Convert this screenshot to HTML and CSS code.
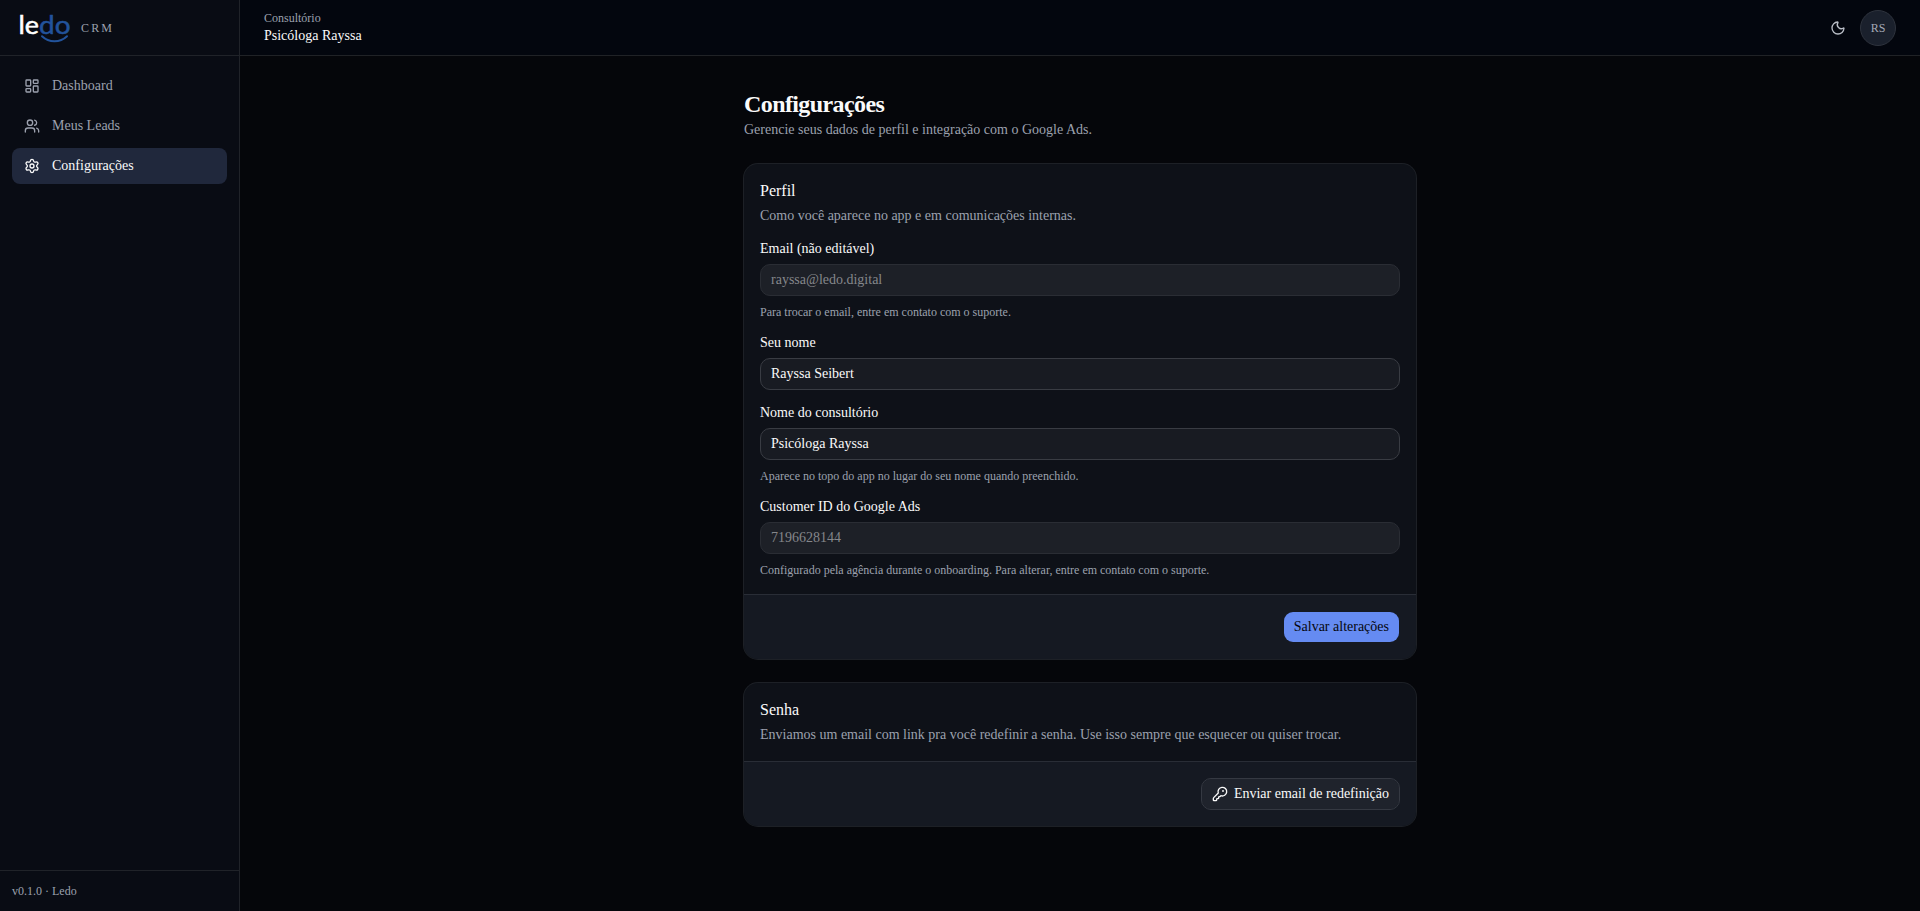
FILE: index.html
```
<!DOCTYPE html>
<html lang="pt-BR">
<head>
    <meta charset="UTF-8">
    <meta name="viewport" content="width=device-width, initial-scale=1.0">
    <title>Configurações · Ledo CRM</title>
    <link rel="stylesheet" href="styles.css">
</head>
<body>
    <div class="layout">
        <aside class="sidebar">
            <div class="brand">
                <svg class="logo" width="52" height="44" viewBox="0 0 52 44">
                    <text class="logo-le" x="-1.5" y="27.500" textLength="20.500" lengthAdjust="spacingAndGlyphs">le</text>
                    <text class="logo-do" x="19" y="27.500" textLength="31.500" lengthAdjust="spacingAndGlyphs">do</text>
                    <path class="smile" d="M22 30.200c7 6.600 18 6.600 25 0"/>
                </svg>
                <span class="brand-tag">CRM</span>
            </div>
            <nav class="nav">
                <a href="#" class="nav-item">
                    <svg class="icon" viewBox="0 0 24 24"><rect width="7" height="9" x="3" y="3" rx="1"/><rect width="7" height="5" x="14" y="3" rx="1"/><rect width="7" height="9" x="14" y="12" rx="1"/><rect width="7" height="5" x="3" y="16" rx="1"/></svg>
                    Dashboard
                </a>
                <a href="#" class="nav-item">
                    <svg class="icon" viewBox="0 0 24 24"><path d="M16 21v-2a4 4 0 0 0-4-4H6a4 4 0 0 0-4 4v2"/><path d="M16 3.128a4 4 0 0 1 0 7.744"/><path d="M22 21v-2a4 4 0 0 0-3-3.870"/><circle cx="9" cy="7" r="4"/></svg>
                    Meus Leads
                </a>
                <a href="#" class="nav-item on">
                    <svg class="icon" viewBox="0 0 24 24"><path d="M9.671 4.136a2.340 2.340 0 0 1 4.659 0 2.340 2.340 0 0 0 3.319 1.915 2.340 2.340 0 0 1 2.330 4.033 2.340 2.340 0 0 0 0 3.831 2.340 2.340 0 0 1-2.330 4.033 2.340 2.340 0 0 0-3.319 1.915 2.340 2.340 0 0 1-4.659 0 2.340 2.340 0 0 0-3.320-1.915 2.340 2.340 0 0 1-2.330-4.033 2.340 2.340 0 0 0 0-3.831A2.340 2.340 0 0 1 6.350 6.051a2.340 2.340 0 0 0 3.319-1.915"/><circle cx="12" cy="12" r="3"/></svg>
                    Configurações
                </a>
            </nav>
            <div class="version">v0.1.0 · Ledo</div>
        </aside>

        <div class="page">
            <header class="topbar">
                <div class="office">
                    <span class="office-label">Consultório</span>
                    <span class="office-name">Psicóloga Rayssa</span>
                </div>
                <div class="actions">
                    <button class="theme" aria-label="Tema">
                        <svg class="icon" viewBox="0 0 24 24"><path d="M20.985 12.486a9 9 0 1 1-9.473-9.472c.405-.022.617.46.402.803a6 6 0 0 0 8.268 8.268c.344-.215.825-.004.803.401"/></svg>
                    </button>
                    <div class="avatar">RS</div>
                </div>
            </header>

            <main class="content">
                <h1>Configurações</h1>
                <p class="lead">Gerencie seus dados de perfil e integração com o Google Ads.</p>

                <form class="card">
                    <div class="card-body">
                        <div class="card-head">
                            <h2>Perfil</h2>
                            <p>Como você aparece no app e em comunicações internas.</p>
                        </div>
                        <div class="field">
                            <label for="email">Email (não editável)</label>
                            <input id="email" type="text" value="rayssa@ledo.digital" disabled>
                            <p class="hint">Para trocar o email, entre em contato com o suporte.</p>
                        </div>
                        <div class="field">
                            <label for="nome">Seu nome</label>
                            <input id="nome" type="text" value="Rayssa Seibert">
                        </div>
                        <div class="field">
                            <label for="consultorio">Nome do consultório</label>
                            <input id="consultorio" type="text" value="Psicóloga Rayssa">
                            <p class="hint">Aparece no topo do app no lugar do seu nome quando preenchido.</p>
                        </div>
                        <div class="field">
                            <label for="customer">Customer ID do Google Ads</label>
                            <input id="customer" type="text" value="7196628144" disabled>
                            <p class="hint">Configurado pela agência durante o onboarding. Para alterar, entre em contato com o suporte.</p>
                        </div>
                    </div>
                    <div class="card-foot">
                        <button type="button" class="btn primary">Salvar alterações</button>
                    </div>
                </form>

                <section class="card">
                    <div class="card-body">
                        <div class="card-head">
                            <h2>Senha</h2>
                            <p>Enviamos um email com link pra você redefinir a senha. Use isso sempre que esquecer ou quiser trocar.</p>
                        </div>
                    </div>
                    <div class="card-foot">
                        <button type="button" class="btn outline">
                            <svg class="icon" viewBox="0 0 24 24"><path d="M2.586 17.414A2 2 0 0 0 2 18.828V21a1 1 0 0 0 1 1h3a1 1 0 0 0 1-1v-1a1 1 0 0 1 1-1h1a1 1 0 0 0 1-1v-1a1 1 0 0 1 1-1h.172a2 2 0 0 0 1.414-.586l.814-.814a6.500 6.500 0 1 0-4-4z"/><circle cx="16.500" cy="7.500" r=".5"/></svg>
                            Enviar email de redefinição
                        </button>
                    </div>
                </section>
            </main>
        </div>
    </div>
</body>
</html>
```
FILE: styles.css
```
* {
    margin: 0;
    padding: 0;
    box-sizing: border-box;
}
body {
    background-color: #05060a;
    color: #fafafa;
    font-family: "Liberation Serif", "Times New Roman", serif;
    font-size: 14px;
    line-height: 20px;
}
input, button {
    font: inherit;
    color: inherit;
}
.layout {
    display: flex;
    min-height: 100vh;
}
.icon {
    width: 16px;
    height: 16px;
    flex-shrink: 0;
    fill: none;
    stroke: currentColor;
    stroke-width: 2;
    stroke-linecap: round;
    stroke-linejoin: round;
}

/* sidebar */
.sidebar {
    display: flex;
    flex-direction: column;
    width: 240px;
    flex-shrink: 0;
    background-color: #090c14;
    border-right: 1px solid #202329;
}
.brand {
    display: flex;
    align-items: center;
    gap: 9px;
    height: 56px;
    padding: 0 20px;
    border-bottom: 1px solid #202329;
}
.logo {
    overflow: visible;
}
.logo text {
    font-family: Lato, sans-serif;
    font-size: 25.5px;
}
.logo-le {
    fill: #fff;
    stroke: #fff;
    stroke-width: .5;
}
.logo-do {
    fill: #22539b;
    stroke: #22539b;
    stroke-width: .5;
}
.smile {
    fill: none;
    stroke: #22539b;
    stroke-width: 2;
    stroke-linecap: round;
}
.brand-tag {
    font-size: 12px;
    line-height: 16px;
    letter-spacing: 2.16px;
    color: #9ca1ae;
}
.nav {
    display: flex;
    flex-direction: column;
    gap: 4px;
    flex: 1;
    padding: 12px;
}
.nav-item {
    display: flex;
    align-items: center;
    gap: 12px;
    height: 36px;
    padding: 0 12px;
    border-radius: 8px;
    color: #9ca1ae;
    text-decoration: none;
}
.nav-item.on {
    background-color: #20283c;
    color: #fafafa;
}
.version {
    padding: 12px;
    border-top: 1px solid #202329;
    font-size: 12px;
    line-height: 16px;
    color: #9ca1ae;
}

/* topbar */
.page {
    flex: 1;
}
.topbar {
    display: flex;
    align-items: center;
    justify-content: space-between;
    height: 56px;
    padding: 0 24px;
    background-color: #03060e;
    border-bottom: 1px solid #202226;
}
.office {
    display: flex;
    flex-direction: column;
}
.office-label {
    font-size: 12px;
    line-height: 16px;
    color: #9ca1ae;
}
.office-name {
    line-height: 20px;
}
.actions {
    display: flex;
    align-items: center;
    gap: 8px;
}
.theme {
    display: flex;
    align-items: center;
    justify-content: center;
    width: 28px;
    height: 28px;
    background: none;
    border: none;
    color: #b9bdc6;
}
.avatar {
    display: flex;
    align-items: center;
    justify-content: center;
    width: 36px;
    height: 36px;
    border: 1px solid #2e333d;
    border-radius: 50%;
    background-color: #1a202c;
    font-size: 12px;
    color: #a4a9b5;
}

/* content */
.content {
    width: 672px;
    margin: 0 auto;
    padding: 32px 0;
}
h1 {
    font-size: 24px;
    line-height: 32px;
    letter-spacing: -.6px;
}
.lead {
    color: #9ca1ae;
}
.card {
    margin-top: 24px;
    border-radius: 14px;
    background-color: #0e1118;
    box-shadow: 0 0 0 1px #1d2026;
    overflow: hidden;
}
.card-body {
    display: flex;
    flex-direction: column;
    gap: 16px;
    padding: 16px;
}
.card-head h2 {
    margin-bottom: 4px;
    font-size: 16px;
    font-weight: 500;
    line-height: 22px;
}
.card-head p {
    color: #9ca1ae;
}
.field {
    display: flex;
    flex-direction: column;
    gap: 8px;
}
.field label {
    line-height: 14px;
}
.field input {
    width: 100%;
    height: 32px;
    padding: 4px 10px;
    border: 1px solid #393c43;
    border-radius: 10px;
    background-color: #181b22;
}
.field input:disabled {
    border-color: #2a2d34;
    background-color: #1d2027;
    color: #85878b;
}
.hint {
    font-size: 12px;
    line-height: 16px;
    color: #9ca1ae;
}
.card-foot {
    display: flex;
    justify-content: flex-end;
    padding: 16px;
    border-top: 1px solid #292d36;
    background-color: #151922;
}
.btn {
    display: flex;
    align-items: center;
    gap: 6px;
    height: 32px;
    padding: 0 10px;
    border: 1px solid transparent;
    border-radius: 10px;
    background-clip: padding-box;
}
.btn.primary {
    background-color: #658bf2;
    color: #05070d;
}
.btn.outline {
    border-color: #353942;
    background-color: #1f232c;
}
```
